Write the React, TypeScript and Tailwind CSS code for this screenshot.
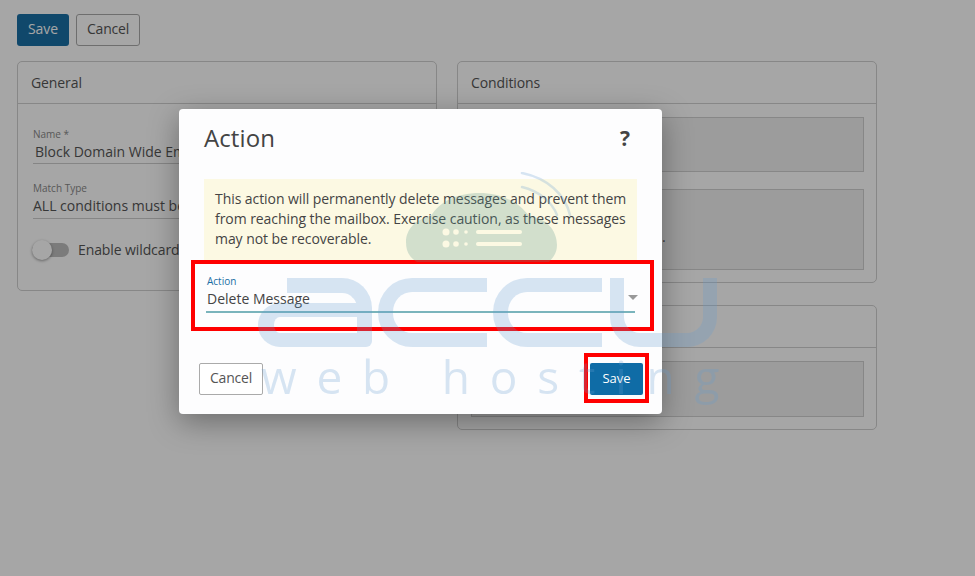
import React from "react";

function Card({ title, className, children }: { title: string; className: string; children: React.ReactNode }) {
  return (
    <section className={`w-[420px] rounded-[5px] border border-[#cfcfcf] ${className}`}>
      <h2 className="h-[42px] border-b border-[#cfcfcf] pl-[13px] text-[14px] font-normal leading-[41px] tracking-[-0.1px] text-[#555]">{title}</h2>
      {children}
    </section>
  );
}

function Watermark() {
  const letter = "border-[#649cd0]";
  return (
    <div className="pointer-events-none absolute left-[258px] top-[172px] h-[235px] w-[470px] opacity-25">
      {/* cloud + signal arcs */}
      <svg className="absolute left-[147px] top-0" width="170" height="92" viewBox="0 0 170 92" fill="none">
        <mask id="holes">
          <rect width="170" height="92" fill="white" />
          <circle cx="41" cy="60" r="3.5" fill="black" />
          <circle cx="51" cy="60" r="2.8" fill="black" />
          <circle cx="61" cy="60" r="1.8" fill="black" />
          <rect x="71" y="58" width="46" height="4" rx="2" fill="black" />
          <circle cx="41" cy="72" r="3.5" fill="black" />
          <circle cx="51" cy="72" r="2.8" fill="black" />
          <circle cx="61" cy="72" r="1.8" fill="black" />
          <rect x="71" y="70" width="46" height="4" rx="2" fill="black" />
        </mask>
        <path
          d="M12 90C4 85 1 79 1 70C1 57 11 47 26 44C34 30 52 21 74 21C96 21 114 30 124 44C141 46 152 58 152 73C152 80 149 85 144 90Z"
          fill="#58948c"
          mask="url(#holes)"
        />
        <path d="M117 1C142 6 160 22 165 43M117 15C134 19 147 30 152 43" stroke="#649cd0" strokeWidth="2.5" strokeLinecap="round" />
      </svg>
      {/* accu */}
      <div className="absolute left-0 top-[106px] flex h-[69px]">
        <div className="relative h-full w-[114px]">
          <div className={`absolute right-0 top-0 h-full w-[85px] rounded-r-[30px] rounded-br-[6px] border-r-[15px] border-t-[15px] ${letter}`} />
          <div className={`absolute bottom-0 left-0 h-[44px] w-[100px] rounded-l-[22px] border-y-[14px] border-l-[16px] ${letter}`} />
        </div>
        <div className={`ml-[6px] h-full w-[109px] rounded-l-[34px] border-y-[14px] border-l-[15px] ${letter}`} />
        <div className={`ml-[6px] h-full w-[109px] rounded-l-[34px] border-y-[14px] border-l-[15px] ${letter}`} />
        <div className={`ml-[8px] h-full w-[107px] rounded-b-[30px] border-x-[14px] border-b-[14px] ${letter}`} />
      </div>
      <p className="absolute left-[3px] top-[174px] whitespace-nowrap text-[46px] font-normal leading-[60px] tracking-[19.8px] text-[#649cd0]">web hosting</p>
    </div>
  );
}

export default function App() {
  return (
    <div className="relative h-[576px] w-[975px] overflow-hidden bg-white font-['Open_Sans',sans-serif]">
      {/* page behind the dialog */}
      <div className="px-[17px] pt-[14px]">
        <div className="flex gap-[7px]">
          <button className="h-[32px] w-[52px] rounded-[3px] bg-[#1a6fa5] pb-[3px] text-[14px] tracking-[-0.1px] text-white">Save</button>
          <button className="h-[32px] w-[64px] rounded-[3px] border border-[#aaa] bg-white pb-[3px] text-[14px] tracking-[-0.2px] text-[#555]">Cancel</button>
        </div>
        <div className="mt-[15px] flex items-start gap-[20px]">
          <Card title="General" className="h-[230px]">
            <div className="px-[15px] pt-[24px]">
              <label className="block text-[10px] leading-[12px] text-[#888]">Name *</label>
              <div className="h-[24px] border-b border-[#ccc] pl-[2px] pt-[2px] text-[14px] leading-[20px] text-[#555]">Block Domain Wide Email</div>
              <label className="mt-[18px] block text-[10px] leading-[12px] text-[#888]">Match Type</label>
              <div className="h-[25px] border-b border-[#ccc] pt-[2px] text-[14px] leading-[20px] text-[#555]">ALL conditions must be met</div>
              <div className="ml-[-1px] mt-[20px] flex items-center gap-[9px]">
                <span className="relative h-[14px] w-[37px] rounded-full bg-[#bdbdbd]">
                  <span className="absolute -top-[3px] left-0 h-[20px] w-[20px] rounded-full bg-white shadow-[0_1px_3px_rgba(0,0,0,0.4)]" />
                </span>
                <span className="text-[14px] tracking-[-0.1px] text-[#555]">Enable wildcards</span>
              </div>
            </div>
          </Card>
          <div className="flex flex-col gap-[22px]">
            <Card title="Conditions" className="h-[222px]">
              <div className="flex flex-col gap-[17px] pl-[13px] pr-[12px] pt-[13px]">
                <div className="h-[55px] border border-[#d0d0d0] bg-[#f0f0f0]" />
                <div className="h-[81px] border border-[#d0d0d0] bg-[#f0f0f0] pl-[190px] pt-[36px] text-[14px] text-[#555]">.</div>
              </div>
            </Card>
            <Card title="Actions" className="h-[125px]">
              <div className="pl-[13px] pr-[12px] pt-[13px]">
                <div className="h-[56px] border border-[#d0d0d0] bg-[#f0f0f0]" />
              </div>
            </Card>
          </div>
        </div>
      </div>

      <div className="absolute inset-0 bg-black/35" />

      {/* dialog */}
      <div className="absolute left-[179px] top-[109px] h-[305px] w-[483px] rounded-[4px] bg-[#fdfdfe] shadow-[0_8px_30px_rgba(0,0,0,0.35)]">
        <div className="flex items-center justify-between pl-[25px] pr-[32px] pt-[11px]">
          <h1 className="text-[24px] font-normal leading-[36px] tracking-[0.1px] text-[#444]">Action</h1>
          <span className="text-[21px] font-bold leading-[36px] text-[#444]">?</span>
        </div>
        <div className="ml-[25px] mt-[23px] h-[83px] w-[433px] bg-[#fcf9e3] pl-[11px] pt-[10px] text-[14px] leading-[20px] tracking-[-0.065px] text-[#444]">
          This action will permanently delete messages and prevent them
          <br />
          from reaching the mailbox. Exercise caution, as these messages
          <br />
          may not be recoverable.
        </div>
        <div className="ml-[27px] mt-[13px] w-[429px] border-b-2 border-[#7ab4bc]">
          <label className="block pl-[1px] text-[10px] leading-[13px] text-[#1a6fa5]">Action</label>
          <div className="relative h-[23px] pl-[1px] pt-[1px] text-[14px] leading-[20px] text-[#444]">
            Delete Message
            <span className="absolute -right-[3px] top-[7px] h-0 w-0 border-x-[5.5px] border-t-[5.5px] border-x-transparent border-t-[#999]" />
          </div>
        </div>
        <div className="mt-[50px] flex items-center justify-between pl-[20px] pr-[19px]">
          <button className="h-[32px] w-[64px] rounded-[2px] border border-[#aaa] bg-white pb-[3px] text-[14px] tracking-[-0.2px] text-[#555]">Cancel</button>
          <button className="h-[32px] w-[53px] rounded-[2px] bg-[#0f6ca6] pb-[1px] text-[13px] font-medium text-white">Save</button>
        </div>
      </div>

      {/* red callouts */}
      <div className="absolute left-[191px] top-[260px] h-[71px] w-[463px] border-[4px] border-[#f00]" />
      <div className="absolute left-[584px] top-[353px] h-[50px] w-[65px] border-[4px] border-[#f00]" />

      <Watermark />
    </div>
  );
}
